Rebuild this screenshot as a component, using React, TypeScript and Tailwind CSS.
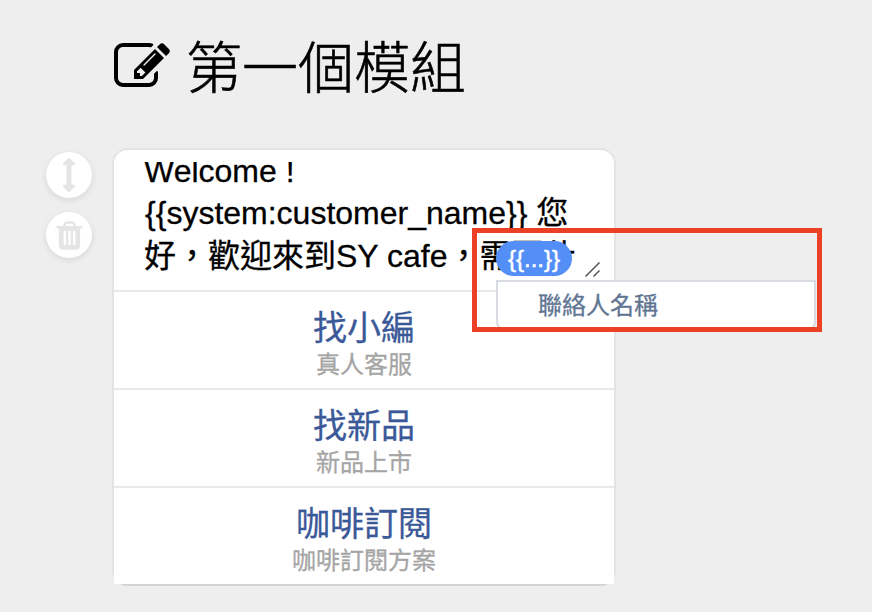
type IconProps = { d: string; className: string };

const PENCIL_SQUARE =
  'M888 1184l116-116-152-152-116 116v56h96v96h56zm440-720q-16-16-33 1l-350 350q-17 17-1 33t33-1l350-350q17-17 1-33zm80 594v190q0 119-84.5 203.5t-203.5 84.5h-832q-119 0-203.5-84.5t-84.5-203.5v-832q0-119 84.5-203.5t203.5-84.5h832q63 0 117 25 15 7 18 23 3 17-9 29l-49 49q-14 14-32 8-23-6-45-6h-832q-66 0-113 47t-47 113v832q0 66 47 113t113 47h832q66 0 113-47t47-113v-126q0-13 9-22l64-64q15-15 35-7t20 29zm-96-738l288 288-672 672h-288v-288zm444 132l-92 92-288-288 92-92q28-28 68-28t68 28l152 152q28 28 28 68t-28 68z';
const ARROWS_V =
  'M1216 320q0 26-19 45t-45 19h-128v1024h128q26 0 45 19t19 45-19 45l-256 256q-19 19-45 19t-45-19l-256-256q-19-19-19-45t19-45 45-19h128v-1024h-128q-26 0-45-19t-19-45 19-45l256-256q19-19 45-19t45 19l256 256q19 19 19 45z';
const TRASH =
  'M704 1376v-704q0-14-9-23t-23-9h-64q-14 0-23 9t-9 23v704q0 14 9 23t23 9h64q14 0 23-9t9-23zm256 0v-704q0-14-9-23t-23-9h-64q-14 0-23 9t-9 23v704q0 14 9 23t23 9h64q14 0 23-9t9-23zm256 0v-704q0-14-9-23t-23-9h-64q-14 0-23 9t-9 23v704q0 14 9 23t23 9h64q14 0 23-9t9-23zm-544-992h448l-48-117q-7-9-17-11h-317q-10 2-17 11zm928 32v64q0 14-9 23t-23 9h-96v948q0 83-47 143.5t-113 60.5h-832q-66 0-113-58.5t-47-141.5v-952h-96q-14 0-23-9t-9-23v-64q0-14 9-23t23-9h309l70-167q15-37 54-63t79-26h320q40 0 79 26t54 63l70 167h309q14 0 23 9t9 23z';

function Icon({ d, className }: IconProps) {
  return (
    <svg viewBox="0 0 1792 1792" fill="currentColor" className={className}>
      <path d={d} />
    </svg>
  );
}

function RoundButton({ d, className }: IconProps) {
  return (
    <button className="flex size-[46px] items-center justify-center rounded-full bg-white text-[#e5e5e5] shadow-[0_2px_6px_rgba(0,0,0,0.1)]">
      <Icon d={d} className={className} />
    </button>
  );
}

const options = [
  { title: '找小編', note: '真人客服' },
  { title: '找新品', note: '新品上市' },
  { title: '咖啡訂閱', note: '咖啡訂閱方案' },
];

export default function App() {
  return (
    <div className="relative h-[612px] w-[872px] overflow-hidden bg-[#eeeeee] font-['Liberation_Sans','Noto_Sans_CJK_TC',sans-serif] text-black">
      <header className="flex h-[148px] items-start pt-[39px] pl-[114px]">
        <Icon d={PENCIL_SQUARE} className="size-14 shrink-0" />
        <h1 className="-mt-[3px] ml-4 font-['Noto_Sans_CJK_TC',sans-serif] text-[56px] leading-[56px] font-extralight whitespace-nowrap [-webkit-text-stroke:0.6px_black]">
          第一個模組
        </h1>
      </header>

      <main className="flex items-start pl-[46px]">
        <aside className="mr-5 flex flex-col gap-[14px] pt-1">
          <RoundButton d={ARROWS_V} className="size-[34px]" />
          <RoundButton d={TRASH} className="size-[33px]" />
        </aside>

        <section className="h-[438px] w-[504px] rounded-2xl border-2 border-[#e4e4e4] border-b-[#d2d2d2]">
          <div className="h-[142px] rounded-t-[14px] border-b-2 border-[#e9e9e9] bg-white pt-3 pl-[30px]">
            <div className="h-[112px] overflow-hidden text-[32px] leading-[42px] whitespace-nowrap [-webkit-text-stroke:0.3px_black]">
              <div className="-mt-3 h-[42px]">Welcome !</div>
              <div className="h-[43px] pl-px">{'{{system:customer_name}} 您'}</div>
              <div className="h-[42px]">好，歡迎來到SY cafe，需要什</div>
            </div>
          </div>
          {options.map((option) => (
            <div
              key={option.title}
              className="flex h-[98px] flex-col items-center border-b-2 border-[#e9e9e9] bg-white pt-[14px] last:h-24 last:border-b-0"
            >
              <div className="text-[34px] leading-[44px] text-[#3b5998] [-webkit-text-stroke:0.3px_#3b5998]">{option.title}</div>
              <div className="text-2xl leading-[30px] text-[#a5a5a5] [-webkit-text-stroke:0.3px_#a5a5a5]">{option.note}</div>
            </div>
          ))}
        </section>
      </main>

      {/* Variable picker floating over the text field */}
      <svg viewBox="0 0 16 16" className="absolute top-[262px] left-[585px] size-4" stroke="#555555" strokeWidth="1.5">
        <path d="M0.5 14.5L14.5 0.5M8.5 14.5L14.5 8.5" />
      </svg>
      <div className="absolute top-[228px] left-[472px] h-[104px] w-[350px] overflow-hidden border-[5px] border-[#ec4026]">
        <div className="ml-[19px] pt-2">
          <div className="flex h-[35px] w-[76px] items-center justify-center rounded-full bg-[#548ef7] text-2xl text-white [-webkit-text-stroke:0.5px_white]">
            {'{{...}}'}
          </div>
          <div className="mt-1 h-[50px] w-80 rounded-b-lg border-2 border-[#d8dce2] bg-white pl-10 text-2xl leading-[47px] text-[#5f7592] [-webkit-text-stroke:0.3px_#5f7592]">
            聯絡人名稱
          </div>
        </div>
      </div>
    </div>
  );
}
